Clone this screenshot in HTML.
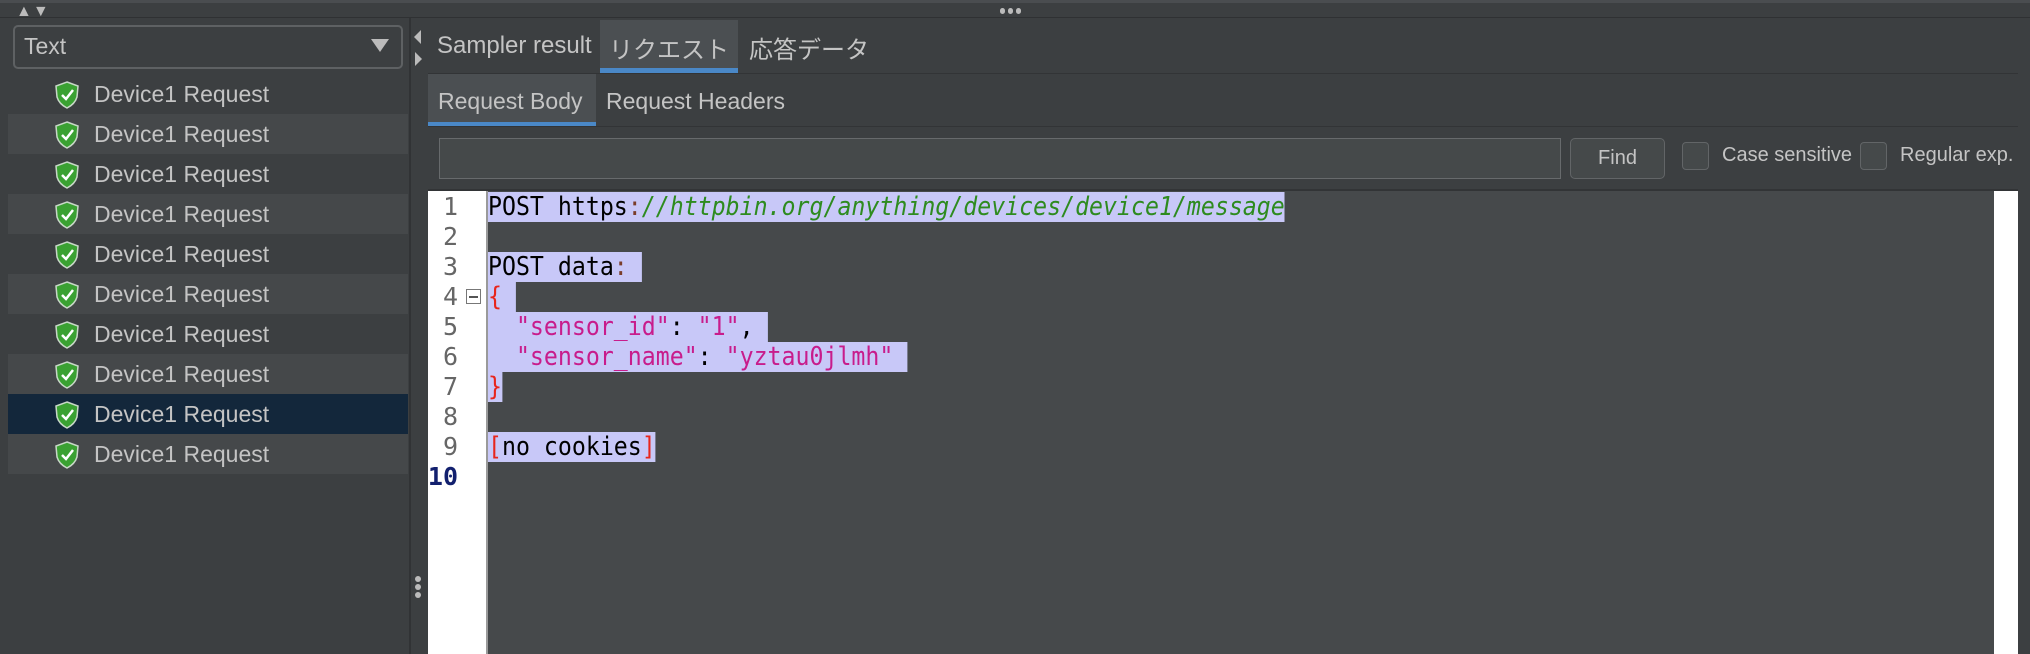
<!DOCTYPE html>
<html><head><meta charset="utf-8"><style>
*{margin:0;padding:0;box-sizing:border-box}
body{width:2030px;height:654px;background:#3c3f41;position:relative;overflow:hidden;font-family:"Liberation Sans","Noto Sans CJK JP",sans-serif;color:#c4c4c4}
.a{position:absolute}
.row{position:absolute;left:8px;width:400px;height:40px;font-size:23px;line-height:40px}
.row span{position:absolute;left:86px}
.row svg{position:absolute;left:46px;top:7px}
.code{position:absolute;left:488px;font-family:"DejaVu Sans Mono",monospace;font-size:25.8px;line-height:30px;height:30px;white-space:pre;color:#000;transform:scaleX(0.9);transform-origin:0 0}
.hl{background:#c8c8f8}
.ln{position:absolute;left:428px;width:30px;text-align:right;font-family:"DejaVu Sans Mono",monospace;font-size:25px;line-height:30px;color:#666}
.k{color:#c81c8c}.r{color:#e8251c}.g{color:#2e8b1f;font-style:italic}.b{color:#7a3d2a}
</style></head><body>
<div class="a" style="left:0;top:0;width:2030px;height:3px;background:#4a4d50"></div>
<div class="a" style="left:0;top:17px;width:2030px;height:1px;background:#2f3133"></div>
<div class="a" style="left:16px;top:3px;font-size:16px;color:#bbb;letter-spacing:1px">▲▼</div>
<div class="a" style="left:1000px;top:8px;width:5px;height:6px;border-radius:3px;background:#bbb;box-shadow:8px 0 0 #bbb,16px 0 0 #bbb"></div>
<!-- combo -->
<div class="a" style="left:13px;top:25px;width:390px;height:44px;border:2px solid #5e6163;border-radius:5px;background:#3c3f41"></div>
<div class="a" style="left:24px;top:33px;font-size:23px">Text</div>
<div class="a" style="left:371px;top:39px;width:0;height:0;border-left:9px solid transparent;border-right:9px solid transparent;border-top:13px solid #bbb"></div>
<!-- list -->
<svg width="0" height="0" style="position:absolute"><defs><g id="sh"><path d="M13 1 L24 5 L23 16 Q21 23 13 27 Q5 23 3 16 L2 5 Z" fill="#3aa132" stroke="#c8d8c8" stroke-width="1.5"/><path d="M8 14 L12 18 L19 9" fill="none" stroke="#fff" stroke-width="2.5"/></g></defs></svg>
<div class="row" style="top:74px;background:#3c3f41"><svg width="27" height="28"><use href="#sh"/></svg><span>Device1 Request</span></div>
<div class="row" style="top:114px;background:#45484a"><svg width="27" height="28"><use href="#sh"/></svg><span>Device1 Request</span></div>
<div class="row" style="top:154px;background:#3c3f41"><svg width="27" height="28"><use href="#sh"/></svg><span>Device1 Request</span></div>
<div class="row" style="top:194px;background:#45484a"><svg width="27" height="28"><use href="#sh"/></svg><span>Device1 Request</span></div>
<div class="row" style="top:234px;background:#3c3f41"><svg width="27" height="28"><use href="#sh"/></svg><span>Device1 Request</span></div>
<div class="row" style="top:274px;background:#45484a"><svg width="27" height="28"><use href="#sh"/></svg><span>Device1 Request</span></div>
<div class="row" style="top:314px;background:#3c3f41"><svg width="27" height="28"><use href="#sh"/></svg><span>Device1 Request</span></div>
<div class="row" style="top:354px;background:#45484a"><svg width="27" height="28"><use href="#sh"/></svg><span>Device1 Request</span></div>
<div class="row" style="top:394px;background:#13273b"><svg width="27" height="28"><use href="#sh"/></svg><span>Device1 Request</span></div>
<div class="row" style="top:434px;background:#45484a"><svg width="27" height="28"><use href="#sh"/></svg><span>Device1 Request</span></div>
<!-- splitter -->
<div class="a" style="left:409px;top:18px;width:2px;height:636px;background:#313335"></div>
<div class="a" style="left:414px;top:30px;width:0;height:0;border-top:7px solid transparent;border-bottom:7px solid transparent;border-right:7px solid #bbb"></div>
<div class="a" style="left:415px;top:52px;width:0;height:0;border-top:7px solid transparent;border-bottom:7px solid transparent;border-left:7px solid #bbb"></div>
<div class="a" style="left:415px;top:576px;width:6px;height:6px;border-radius:3px;background:#bbb;box-shadow:0 8px 0 #bbb,0 16px 0 #bbb"></div>
<!-- tabs -->
<div class="a" style="left:600px;top:20px;width:138px;height:53px;background:#4b4f52"></div>
<div class="a" style="left:600px;top:68px;width:138px;height:5px;background:#4a88c7"></div>
<div class="a" style="left:428px;top:73px;width:1590px;height:1px;background:#323436"></div>
<div class="a" style="left:437px;top:32px;font-size:24px">Sampler result</div>
<div class="a" style="left:609px;top:30px;font-size:24px">リクエスト</div>
<div class="a" style="left:749px;top:30px;font-size:24px">応答データ</div>
<div class="a" style="left:428px;top:74px;width:168px;height:53px;background:#4b4f52"></div>
<div class="a" style="left:428px;top:122px;width:168px;height:5px;background:#4a88c7"></div>
<div class="a" style="left:428px;top:126px;width:1590px;height:1px;background:#323436"></div>
<div class="a" style="left:438px;top:88px;font-size:23px">Request Body</div>
<div class="a" style="left:606px;top:88px;font-size:23px">Request Headers</div>
<!-- search -->
<div class="a" style="left:439px;top:138px;width:1122px;height:41px;border:1.5px solid #676a6c;background:#45494a"></div>
<div class="a" style="left:1570px;top:138px;width:95px;height:41px;border:1.5px solid #626567;border-radius:5px;background:#45494a;font-size:20px;text-align:center;line-height:38px">Find</div>
<div class="a" style="left:1682px;top:142px;width:27px;height:28px;border:1.5px solid #626567;border-radius:4px;background:#45494a"></div>
<div class="a" style="left:1722px;top:144px;font-size:20px">Case sensitive</div>
<div class="a" style="left:1860px;top:142px;width:27px;height:28px;border:1.5px solid #626567;border-radius:4px;background:#45494a"></div>
<div class="a" style="left:1900px;top:144px;font-size:20px">Regular exp.</div>
<div class="a" style="left:428px;top:189px;width:1590px;height:2px;background:#323436"></div>
<!-- editor -->
<div class="a" style="left:428px;top:191px;width:1590px;height:463px;background:#46494b"></div>
<div class="a" style="left:428px;top:191px;width:58px;height:463px;background:#fff"></div>
<div class="a" style="left:486px;top:191px;width:2px;height:463px;background:#9a9a9a"></div>
<div class="a" style="left:1994px;top:191px;width:24px;height:463px;background:#fff"></div>
<div class="ln" style="top:192px">1</div>
<div class="ln" style="top:222px">2</div>
<div class="ln" style="top:252px">3</div>
<div class="ln" style="top:282px">4</div>
<div class="ln" style="top:312px">5</div>
<div class="ln" style="top:342px">6</div>
<div class="ln" style="top:372px">7</div>
<div class="ln" style="top:402px">8</div>
<div class="ln" style="top:432px">9</div>
<div class="ln" style="top:462px;left:418px;width:40px;color:#12206e;font-weight:bold">10</div>
<div class="a" style="left:466px;top:289px;width:15px;height:15px;border:1.5px solid #777;background:#fff"></div>
<div class="a" style="left:469px;top:296px;width:9px;height:1.5px;background:#555"></div>
<div class="code hl" style="top:192px">POST https<span class="b">:</span><span class="g">//httpbin.org/anything/devices/device1/message</span></div>
<div class="code hl" style="top:252px">POST data<span class="b">:</span> </div>
<div class="code hl" style="top:282px"><span class="r">{</span> </div>
<div class="code hl" style="top:312px">  <span class="k">"sensor_id"</span>: <span class="k">"1"</span>, </div>
<div class="code hl" style="top:342px">  <span class="k">"sensor_name"</span>: <span class="k">"yztau0jlmh"</span> </div>
<div class="code hl" style="top:372px"><span class="r">}</span></div>
<div class="code hl" style="top:432px"><span class="r">[</span>no cookies<span class="r">]</span></div>
</body></html>
